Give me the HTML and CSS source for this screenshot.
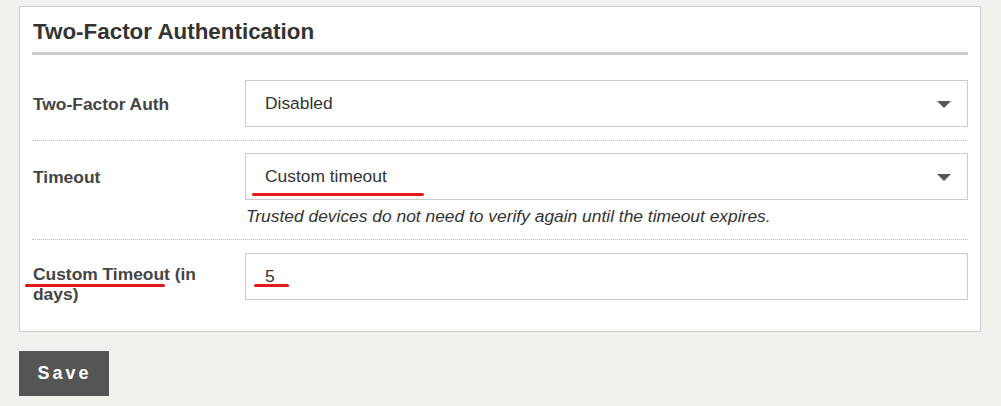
FILE: index.html
```html
<!DOCTYPE html>
<html lang="en">
<head>
    <meta charset="UTF-8">
    <meta name="viewport" content="width=device-width, initial-scale=1.0">
    <title>Two-Factor Authentication</title>
    <link rel="stylesheet" href="styles.css">
</head>
<body>
    <div class="panel">
        <h2>Two-Factor Authentication</h2>

        <div class="row first">
            <label class="label">Two-Factor Auth</label>
            <div class="field">
                <div class="select">
                    <span>Disabled</span>
                    <svg class="arrow" width="14" height="7" viewBox="0 0 14 7"><path d="M0 0h14L7 7z" fill="#555"/></svg>
                </div>
            </div>
        </div>

        <div class="row">
            <label class="label">Timeout</label>
            <div class="field">
                <div class="select">
                    <span>Custom timeout</span>
                    <svg class="arrow" width="14" height="7" viewBox="0 0 14 7"><path d="M0 0h14L7 7z" fill="#555"/></svg>
                    <span class="mark mark-select"></span>
                </div>
                <p class="help">Trusted devices do not need to verify again until the timeout expires.</p>
            </div>
        </div>

        <div class="row last">
            <label class="label">Custom Timeout (in days)<span class="mark mark-label"></span></label>
            <div class="field">
                <input type="text" class="text-input" value="5">
                <span class="mark mark-value"></span>
            </div>
        </div>
    </div>

    <button class="save-btn">Save</button>
</body>
</html>
```

FILE: styles.css
```css
* {
    font-family: 'Liberation Sans', Arial, sans-serif;
    box-sizing: border-box;
}
body {
    margin: 0;
    padding: 6px 20px 0 19px;
    background-color: #f2f1ee;
    color: #333;
}
.panel {
    background: #fff;
    border: 1px solid #ccc;
    padding: 0 12px 0 12px;
}
h2 {
    margin: 0;
    padding: 12px 0 8px 1px;
    font-size: 22.4px;
    line-height: 25px;
    color: #333;
    border-bottom: 3px solid #ccc;
}
.row {
    display: grid;
    grid-template-columns: 180px 1fr;
    column-gap: 33px;
    padding: 12px 0 13px;
    border-bottom: 1px dotted #bbb;
}
.row.first {
    padding-top: 25px;
}
.row.last {
    border-bottom: none;
    padding: 13px 0 27px;
}
.label {
    position: relative;
    padding: 14px 0 0 1px;
    font-size: 17.4px;
    line-height: 20px;
    font-weight: bold;
    color: #444;
}
.row.last .label {
    padding-top: 11px;
}
.field {
    position: relative;
}
.select {
    position: relative;
    display: flex;
    align-items: center;
    justify-content: space-between;
    height: 47px;
    padding: 0 16px 0 19px;
    border: 1px solid #ccc;
    font-size: 17.4px;
    color: #333;
}
.arrow {
    margin-top: 2px;
}
.help {
    margin: 6px 0 0 1px;
    font-size: 17.4px;
    line-height: 20px;
    font-style: italic;
    color: #333;
}
.text-input {
    display: block;
    width: 100%;
    height: 47px;
    padding: 0 19px;
    border: 1px solid #ccc;
    border-radius: 0;
    font-size: 17.4px;
    color: #333;
    background: #fff;
    outline: none;
}
.mark {
    position: absolute;
    height: 3px;
    border-radius: 2px;
    background-color: #e21b1b;
}
.mark-select {
    left: 6px;
    top: 39px;
    width: 172px;
}
.mark-label {
    left: -7px;
    top: 31px;
    width: 140px;
}
.mark-value {
    left: 9px;
    top: 31px;
    width: 35px;
}
.save-btn {
    display: block;
    margin-top: 19px;
    width: 90px;
    height: 45px;
    padding: 0 0 0 1px;
    border: none;
    border-radius: 0;
    background-color: #555;
    color: #fff;
    font-size: 18px;
    font-weight: bold;
    letter-spacing: 3px;
    cursor: pointer;
}
```
